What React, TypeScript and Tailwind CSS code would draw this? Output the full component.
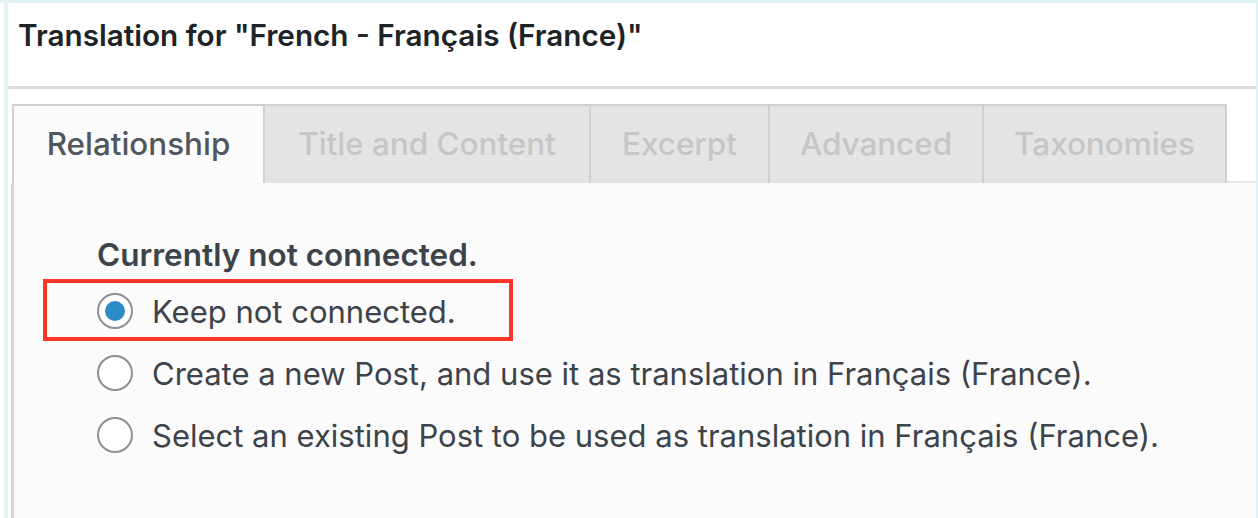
const tabs = [
  { label: "Relationship", w: "w-[251px]" },
  { label: "Title and Content", w: "w-[326px]" },
  { label: "Excerpt", w: "w-[179px]" },
  { label: "Advanced", w: "w-[214px]" },
  { label: "Taxonomies", w: "w-[245px] border-r-2" },
];

const options = [
  "Keep not connected.",
  "Create a new Post, and use it as translation in Français (France).",
  "Select an existing Post to be used as translation in Français (France).",
];

function Radio({ checked }: { checked?: boolean }) {
  return (
    <span className="flex h-[36px] w-[36px] shrink-0 items-center justify-center rounded-full border-2 border-[#8c8f94] bg-white">
      {checked && <span className="h-[20px] w-[20px] rounded-full bg-[#2a8bc6]" />}
    </span>
  );
}

export default function App() {
  return (
    <div className="h-[518px] w-[1258px] overflow-hidden border-t-[3px] border-[#e0f3f3] bg-white pl-[4px] font-['Inter',sans-serif]">
      <div className="flex h-full flex-col border-r-[2px] border-l-[4px] border-[#e0f3f3] bg-white">
        {/* Header */}
        <div className="h-[83px] pl-[10px] pt-[18px] text-[29.7px] font-semibold leading-none text-[#1d2327]">
          Translation for "French - Français (France)"
        </div>
        <div className="h-[3px] bg-[#dcdcde]" />

        {/* Tabs + panel */}
        <div className="flex flex-1 flex-col pl-[3px] pt-[15px]">
          <div className="flex h-[79px] pl-[1px]">
            {tabs.map((tab, i) => (
              <div
                key={tab.label}
                className={`${tab.w} flex shrink-0 items-center justify-center border-t-2 border-l-2 border-[#d0d0d0] text-[31.4px] font-medium leading-none ${
                  i === 0 ? "bg-[#fcfcfc] text-[#50575e]" : "bg-[#e4e4e4] text-[#c6c6c6]"
                }`}
              >
                {tab.label}
              </div>
            ))}
            <div className="flex-1 border-b-2 border-[#e6e6e6]" />
          </div>

          <div className="flex-1 border-l-[3px] border-[#d6d6d6] bg-[#fbfbfb] pl-[83px] pt-[56px]">
            <div className="mb-[9px] h-[32px] text-[31.5px] font-semibold leading-none text-[#3c434a]">
              Currently not connected.
            </div>
            {options.map((opt, i) => (
              <div key={opt} className="relative flex h-[62px] items-center gap-[19px]">
                {i === 0 && (
                  <span className="absolute top-[-1px] left-[-54px] h-[62px] w-[470px] border-4 border-[#ff3527]" />
                )}
                <Radio checked={i === 0} />
                <span className="text-[31px] leading-none text-[#3c434a]">{opt}</span>
              </div>
            ))}
          </div>
        </div>
      </div>
    </div>
  );
}
